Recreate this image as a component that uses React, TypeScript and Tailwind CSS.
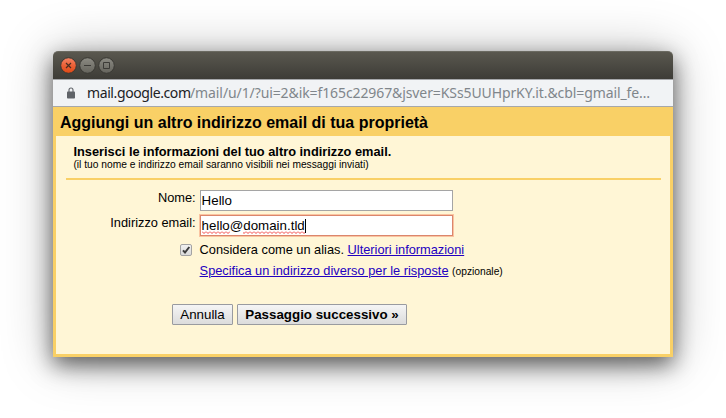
import React from "react";

function TitleBar() {
  return (
    <div className="flex h-7 items-center gap-[1px] rounded-t-[5px] border-t border-[#6b6a61] bg-linear-to-b from-[#5a584f] to-[#3d3c37] pl-[7px]">
      <svg className="h-[18px] w-[56px]" viewBox="0 0 56 18" fill="none">
        <defs>
          <linearGradient id="close" x1="0" y1="0" x2="0" y2="1">
            <stop offset="0" stopColor="#f58465" />
            <stop offset="0.5" stopColor="#eb6137" />
            <stop offset="1" stopColor="#df4814" />
          </linearGradient>
          <linearGradient id="plain" x1="0" y1="0" x2="0" y2="1">
            <stop offset="0" stopColor="#8c8b83" />
            <stop offset="1" stopColor="#64635c" />
          </linearGradient>
        </defs>
        <circle cx="8.5" cy="8.5" r="7.8" fill="url(#close)" stroke="#393833" />
        <circle cx="27.5" cy="8.5" r="7.8" fill="url(#plain)" stroke="#393833" />
        <circle cx="46.5" cy="8.5" r="7.8" fill="url(#plain)" stroke="#393833" />
        <path d="M6 6l5 5M11 6l-5 5" stroke="#4a2d20" strokeWidth="1.2" />
        <path d="M24 8.5h7" stroke="#3c3b37" />
        <path d="M43.5 5.5h6v6h-6z" stroke="#3c3b37" />
      </svg>
    </div>
  );
}

function AddressBar() {
  return (
    <div className="flex h-7 items-center border-y border-[#a6a8ab] bg-[#f1f3f5] pl-[14px]">
      <svg className="h-3 w-2" viewBox="0 0 8 12" fill="none">
        <path d="M2 5V3a2 2 0 0 1 4 0v2" stroke="#5f6368" strokeWidth="1.1" />
        <rect y="4.5" width="8" height="7" rx="0.8" fill="#5f6368" />
      </svg>
      <div className="ml-3 flex whitespace-pre font-['Noto_Sans',sans-serif] text-[14px] leading-[26px]">
        <span className="w-[103px] tracking-[-0.4px] text-[#202124]">mail.google.com</span>
        <span className="tracking-[-0.1px] text-[#80868b]">/mail/u/1/?ui=2&amp;ik=f165c22967&amp;jsver=KSs5UUHprKY.it.&amp;cbl=gmail_fe…</span>
      </div>
    </div>
  );
}

const link = "text-[#2200c1] underline";

export default function App() {
  return (
    <div className="h-[418px] w-[726px] overflow-hidden bg-white pt-[51px] pl-[53px] font-['Liberation_Sans',Arial,sans-serif] text-[12.8px] leading-[15px] text-black">
      <div className="flex h-[306px] w-[620px] flex-col rounded-t-[5px] shadow-[0_8px_22px_rgba(0,0,0,0.58),0_2px_52px_rgba(0,0,0,0.27)]">
        <TitleBar />
        <AddressBar />
        <main className="flex flex-1 flex-col bg-[#f9d066] px-[3px] pb-[3px]">
          <h1 className="h-[29px] pl-1 text-[16px] leading-[31px] font-bold">Aggiungi un altro indirizzo email di tua proprietà</h1>
          <section className="flex-1 bg-[#fff6d6] pt-[8px] pr-[9px] pl-[10px]">
            <header className="h-9 border-b-2 border-[#f9d066] pl-[7.4px]">
              <h2 className="font-bold">Inserisci le informazioni del tuo altro indirizzo email.</h2>
              <p className="text-[10.24px] leading-[11px]">(il tuo nome e indirizzo email saranno visibili nei messaggi inviati)</p>
            </header>
            <div className="grid grid-cols-[129.6px_1fr] gap-x-1 pt-[10px]">
              <label className="text-right">Nome:</label>
              <div className="h-[21px] w-[253px] border border-[#a5a5a5] bg-white pl-px text-[13.333px] leading-[20px]">Hello</div>
              <label className="mt-1 text-right">Indirizzo email:</label>
              <div className="mt-1 flex h-[21px] w-[253px] items-start border border-[#db866c] bg-white pl-px text-[13.333px] leading-[20px] shadow-[0_0_0_1px_#fac4a1]">
                <span className="relative">
                  hello@domain.tld
                  <svg className="absolute top-[15px] left-0 h-[3px] w-full">
                    <defs>
                      <pattern id="spell" width="4" height="3" patternUnits="userSpaceOnUse">
                        <path d="M0 .5L2 2.5L4 .5" fill="none" stroke="#f03030" strokeWidth=".9" />
                      </pattern>
                    </defs>
                    <rect width="28" height="3" fill="url(#spell)" />
                    <rect x="41" width="63" height="3" fill="url(#spell)" />
                  </svg>
                </span>
                <span className="mt-[3px] h-[14px] w-px bg-black" />
              </div>
            </div>
            <div className="mt-[6px] flex h-[15px] items-center pl-[114px]">
              <svg className="mr-[7.6px] h-3 w-3 shrink-0" viewBox="0 0 12 12">
                <defs>
                  <linearGradient id="box" x1="0" y1="0" x2="0" y2="1">
                    <stop stopColor="#f2f2f2" />
                    <stop offset="1" stopColor="#d9d9d9" />
                  </linearGradient>
                </defs>
                <rect x=".5" y=".5" width="11" height="11" rx="1.5" fill="url(#box)" stroke="#a3a3a3" />
                <path d="M3 6.3l2 2.2L9.3 3" fill="none" stroke="#3c3c3c" strokeWidth="2" />
              </svg>
              <span>Considera come un alias. <a className={link}>Ulteriori informazioni</a></span>
            </div>
            <div className="mt-[6px] h-[15px] pl-[133.6px] whitespace-nowrap">
              <a className={link}>Specifica un indirizzo diverso per le risposte</a> <span className="text-[10.24px]">(opzionale)</span>
            </div>
            <div className="mt-[26px] flex gap-1 pl-[106px] text-[13.333px]">
              <button className="h-[21px] w-[61px] rounded-[1px] border border-[#999ba0] bg-linear-to-b from-[#f5f5f5] to-[#dcdcdc] leading-[19px]">Annulla</button>
              <button className="h-[21px] w-[170px] rounded-[1px] border border-[#999ba0] bg-linear-to-b from-[#f5f5f5] to-[#dcdcdc] leading-[19px] font-bold">Passaggio successivo »</button>
            </div>
          </section>
        </main>
      </div>
    </div>
  );
}
